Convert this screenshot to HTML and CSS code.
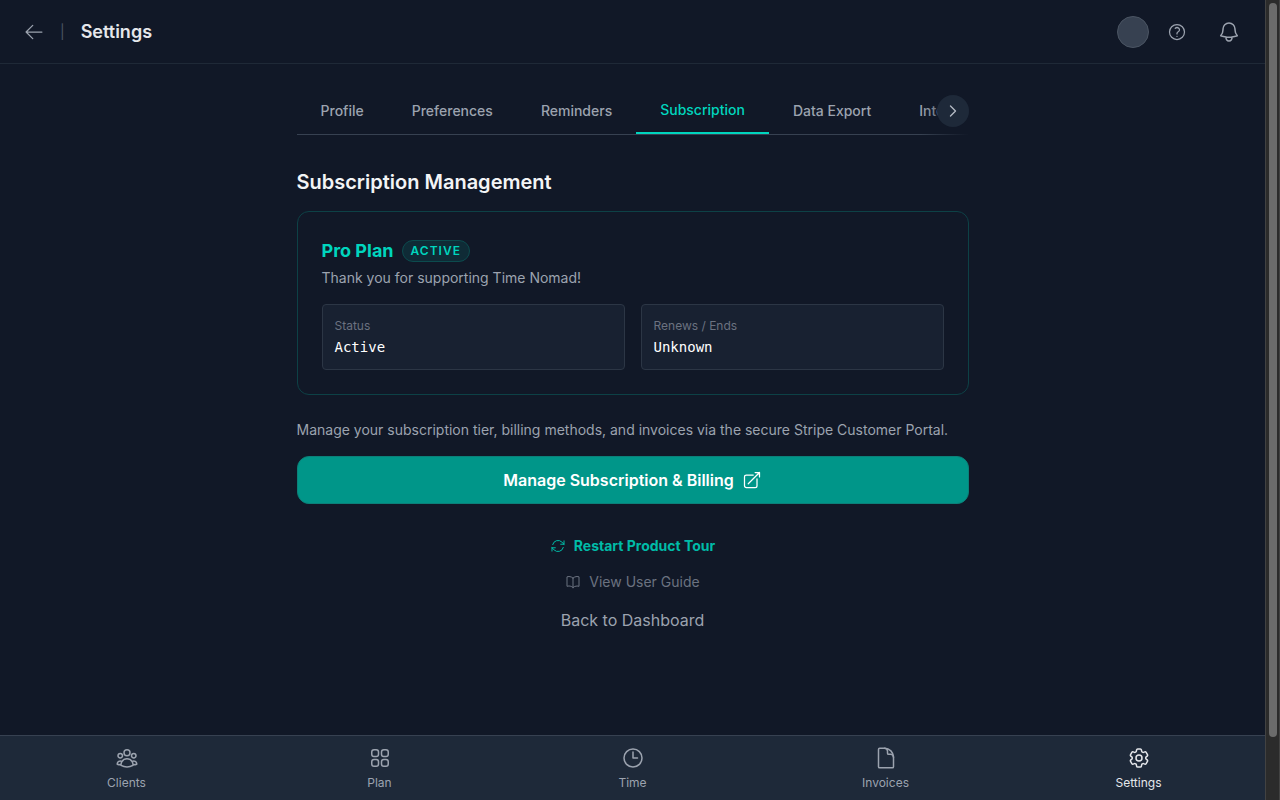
FILE: index.html
```html
<!DOCTYPE html>
<html lang="en">
<head>
  <meta charset="UTF-8" />
  <meta name="viewport" content="width=device-width, initial-scale=1.0"/>
  <title>Settings - Time Nomad</title>
  <link rel="stylesheet" href="styles.css">
</head>
<body>

  <div class="app">
    <header class="topbar">
      <a class="back" href="#" aria-label="Back">
        <svg class="icon icon-20" viewBox="0 0 24 24"><path d="M10.5 20 2.500 12m0 0 8-8M2.500 12h19"/></svg>
      </a>
      <span class="divider">|</span>
      <h1>Settings</h1>
      <div class="actions">
        <span class="avatar"></span>
        <button class="icon-btn" type="button" aria-label="Help">
          <svg class="icon icon-20" viewBox="0 0 24 24"><path d="M9.879 7.519c1.171-1.025 3.071-1.025 4.242 0 1.172 1.025 1.172 2.687 0 3.712-.203.179-.43.326-.67.442-.745.361-1.45.999-1.45 1.827v.75M21 12a9 9 0 1 1-18 0 9 9 0 0 1 18 0Zm-9 5.25h.008v.008H12v-.008Z"/></svg>
        </button>
        <button class="icon-btn bell" type="button" aria-label="Notifications">
          <svg class="icon" viewBox="0 0 24 24"><path d="M14.857 17.082a23.848 23.848 0 0 0 5.454-1.31A8.967 8.967 0 0 1 18 9.75V9A6 6 0 0 0 6 9v.75a8.967 8.967 0 0 1-2.312 6.022c1.733.64 3.56 1.085 5.455 1.31m5.714 0a24.255 24.255 0 0 1-5.714 0m5.714 0a3 3 0 1 1-5.714 0"/></svg>
        </button>
      </div>
    </header>

    <main>
      <div class="tabs-wrap">
        <nav class="tabs">
          <button type="button">Profile</button>
          <button type="button">Preferences</button>
          <button type="button">Reminders</button>
          <button type="button" class="active">Subscription</button>
          <button type="button">Data Export</button>
          <button type="button">Integrations</button>
        </nav>
        <div class="tabs-fade"></div>
        <button class="tabs-next" type="button" aria-label="More tabs">
          <svg class="icon icon-16 bold" viewBox="0 0 24 24"><path d="m8.25 4.5 7.5 7.5-7.5 7.5"/></svg>
        </button>
      </div>

      <h2>Subscription Management</h2>

      <section class="plan">
        <div class="plan-title">
          <h3>Pro Plan</h3>
          <span class="badge">ACTIVE</span>
        </div>
        <p>Thank you for supporting Time Nomad!</p>
        <dl class="facts">
          <div>
            <dt>Status</dt>
            <dd>Active</dd>
          </div>
          <div>
            <dt>Renews / Ends</dt>
            <dd>Unknown</dd>
          </div>
        </dl>
      </section>

      <p class="note">Manage your subscription tier, billing methods, and invoices via the secure Stripe Customer Portal.</p>
      <button class="manage" type="button">
        Manage Subscription &amp; Billing
        <svg class="icon icon-20" viewBox="0 0 24 24"><path d="M13.5 6H5.25A2.25 2.25 0 0 0 3 8.25v10.5A2.25 2.25 0 0 0 5.25 21h10.5A2.25 2.25 0 0 0 18 18.75V10.5m-10.5 6L21 3m0 0h-5.25M21 3v5.25"/></svg>
      </button>

      <div class="links">
        <button class="tour" type="button">
          <svg class="icon icon-16" viewBox="0 0 24 24"><path d="M16.023 9.348h4.992v-.001M2.985 19.644v-4.992m0 0h4.992m-4.993 0 3.181 3.183a8.25 8.25 0 0 0 13.803-3.7M4.031 9.865a8.25 8.25 0 0 1 13.803-3.7l3.181 3.182m0-4.991v4.99"/></svg>
          Restart Product Tour
        </button>
        <a class="guide" href="#">
          <svg class="icon icon-16" viewBox="0 0 24 24"><path d="M12 6.042A8.967 8.967 0 0 0 6 3.75c-1.052 0-2.062.18-3 .512v14.25A8.987 8.987 0 0 1 6 18c2.305 0 4.408.867 6 2.292m0-14.25a8.966 8.966 0 0 1 6-2.292c1.052 0 2.062.18 3 .512v14.25A8.987 8.987 0 0 0 18 18a8.967 8.967 0 0 0-6 2.292m0-14.25v14.25"/></svg>
          View User Guide
        </a>
        <a class="dashboard" href="#">Back to Dashboard</a>
      </div>
    </main>

    <nav class="bottom-nav">
      <a href="#">
        <svg class="icon" viewBox="0 0 24 24"><path d="M18 18.72a9.094 9.094 0 0 0 3.741-.479 3 3 0 0 0-4.682-2.72m.94 3.198.001.031c0 .225-.012.447-.037.666A11.944 11.944 0 0 1 12 21c-2.17 0-4.207-.576-5.963-1.584A6.062 6.062 0 0 1 6 18.719m12 0a5.971 5.971 0 0 0-.941-3.197m0 0A5.995 5.995 0 0 0 12 12.75a5.995 5.995 0 0 0-5.058 2.772m0 0a3 3 0 0 0-4.681 2.72 8.986 8.986 0 0 0 3.74.477m.94-3.197a5.971 5.971 0 0 0-.94 3.197M15 6.75a3 3 0 1 1-6 0 3 3 0 0 1 6 0Zm6 3a2.25 2.25 0 1 1-4.5 0 2.25 2.25 0 0 1 4.5 0Zm-13.5 0a2.25 2.25 0 1 1-4.5 0 2.25 2.25 0 0 1 4.5 0Z"/></svg>
        Clients
      </a>
      <a href="#">
        <svg class="icon" viewBox="0 0 24 24"><rect x="3.75" y="3.75" width="6.75" height="6.75" rx="2.25"/><rect x="13.5" y="3.75" width="6.75" height="6.75" rx="2.25"/><rect x="3.75" y="13.5" width="6.75" height="6.75" rx="2.25"/><rect x="13.5" y="13.5" width="6.75" height="6.75" rx="2.25"/></svg>
        Plan
      </a>
      <a href="#">
        <svg class="icon" viewBox="0 0 24 24"><path d="M12 6v6h4.5m4.5 0a9 9 0 1 1-18 0 9 9 0 0 1 18 0Z"/></svg>
        Time
      </a>
      <a href="#">
        <svg class="icon" viewBox="0 0 24 24"><path d="M19.5 11.250v9.375c0 .621-.504 1.125-1.125 1.125H5.625A1.125 1.125 0 0 1 4.5 20.625V3.375c0-.621.504-1.125 1.125-1.125H10.5a9 9 0 0 1 9 9Z"/><path d="M19.5 11.250a3 3 0 0 0-3-3h-1.875A1.125 1.125 0 0 1 13.500 7.125V5.250a3 3 0 0 0-3-3"/></svg>
        Invoices
      </a>
      <a href="#" class="current">
        <svg class="icon" viewBox="0 0 24 24"><path d="M9.594 3.94c.09-.542.56-.94 1.11-.94h2.593c.55 0 1.02.398 1.11.94l.213 1.281c.063.374.313.686.645.87.074.04.147.083.22.127.325.196.72.257 1.075.124l1.217-.456a1.125 1.125 0 0 1 1.37.49l1.296 2.247a1.125 1.125 0 0 1-.26 1.431l-1.003.827c-.293.241-.438.613-.43.992a7.723 7.723 0 0 1 0 .255c-.008.378.137.75.43.991l1.004.827c.424.35.534.955.26 1.43l-1.298 2.247a1.125 1.125 0 0 1-1.369.491l-1.217-.456c-.355-.133-.75-.072-1.076.124a6.47 6.47 0 0 1-.22.128c-.331.183-.581.495-.644.869l-.213 1.281c-.09.543-.56.94-1.11.94h-2.594c-.55 0-1.019-.398-1.11-.94l-.213-1.281c-.062-.374-.312-.686-.644-.87a6.52 6.52 0 0 1-.22-.127c-.325-.196-.72-.257-1.076-.124l-1.217.456a1.125 1.125 0 0 1-1.369-.49l-1.297-2.247a1.125 1.125 0 0 1 .26-1.431l1.004-.827c.292-.24.437-.613.43-.991a6.932 6.932 0 0 1 0-.255c.007-.38-.138-.751-.43-.992l-1.004-.827a1.125 1.125 0 0 1-.26-1.43l1.297-2.247a1.125 1.125 0 0 1 1.37-.491l1.216.456c.356.133.751.072 1.076-.124.072-.044.146-.086.22-.128.332-.183.582-.495.644-.869l.214-1.28Z"/><path d="M15 12a3 3 0 1 1-6 0 3 3 0 0 1 6 0Z"/></svg>
        Settings
      </a>
    </nav>
  </div>

  <div class="scrollbar" aria-hidden="true"><div class="thumb"></div></div>

</body>
</html>
```

FILE: styles.css
```css
* {
  box-sizing: border-box;
}
body {
  margin: 0;
  display: flex;
  height: 100vh;
  font-family: Inter, sans-serif;
  font-size: 14px;
  line-height: 20px;
  background: #111827;
  color: #f3f4f6;
}
h1, h2, h3, p, dl, dd {
  margin: 0;
}
button {
  font: inherit;
  color: inherit;
  background: none;
  border: none;
  padding: 0;
  cursor: pointer;
}
a {
  color: inherit;
  text-decoration: none;
}

/* icons */
.icon {
  display: block;
  flex: none;
  width: 24px;
  height: 24px;
  fill: none;
  stroke: currentColor;
  stroke-width: 1.5;
  stroke-linecap: round;
  stroke-linejoin: round;
}
.icon-20 {
  width: 20px;
  height: 20px;
}
.icon-16 {
  width: 16px;
  height: 16px;
}
.icon.bold {
  stroke-width: 2;
}

.app {
  flex: 1;
  min-width: 0;
  display: flex;
  flex-direction: column;
}

/* header */
.topbar {
  display: flex;
  align-items: center;
  height: 64px;
  padding: 0 24px;
  border-bottom: 1px solid #1f2937;
}
.back {
  color: #9ca3af;
}
.divider {
  margin: 0 16px;
  color: #4b5563;
}
.topbar h1 {
  font-size: 18px;
  line-height: 28px;
  font-weight: 600;
  color: #e5e7eb;
}
.actions {
  display: flex;
  align-items: center;
  margin-left: auto;
  color: #9ca3af;
}
.avatar {
  width: 32px;
  height: 32px;
  border-radius: 50%;
  background: #374151;
  border: 1px solid #4b5563;
}
.icon-btn {
  margin-left: 18px;
}
.icon-btn.bell {
  margin-left: 30px;
}

main {
  flex: 1;
  width: 100%;
  max-width: 672px;
  margin: 0 auto;
  padding-top: 24px;
}

/* tabs */
.tabs-wrap {
  position: relative;
  margin-bottom: 33px;
}
.tabs {
  display: flex;
  overflow: hidden;
  border-bottom: 1px solid #374151;
}
.tabs button {
  flex: none;
  padding: 12px 24px;
  font-weight: 500;
  color: #9ca3af;
}
.tabs .active {
  color: #00d5be;
  border-bottom: 2px solid #00d5be;
}
.tabs-fade {
  position: absolute;
  top: 0;
  right: 0;
  bottom: 0;
  width: 48px;
  background: linear-gradient(to left, #111827, transparent);
}
.tabs-next {
  position: absolute;
  top: 7px;
  right: 0;
  width: 32px;
  height: 32px;
  display: flex;
  align-items: center;
  justify-content: center;
  border-radius: 50%;
  background: #1e2939;
  color: #b4bac4;
}

/* subscription */
h2 {
  font-size: 20px;
  line-height: 28px;
  font-weight: 600;
  margin-bottom: 15px;
}
.plan {
  padding: 24px;
  border: 1px solid #0d4146;
  border-radius: 12px;
}
.plan-title {
  display: flex;
  align-items: center;
  gap: 8px;
  margin-bottom: 2px;
}
.plan h3 {
  font-size: 18px;
  line-height: 30px;
  font-weight: 700;
  color: #00d5be;
}
.badge {
  padding: 2px 8px;
  border: 1px solid #0c4b4e;
  border-radius: 12px;
  background: #0f2b36;
  color: #00d5be;
  font-size: 12px;
  line-height: 16px;
  font-weight: 600;
  letter-spacing: 1px;
}
.plan p, .note {
  color: #9ca3af;
}
.facts {
  display: grid;
  grid-template-columns: 1fr 1fr;
  gap: 16px;
  margin-top: 16px;
}
.facts div {
  padding: 12px;
  border: 1px solid #2c3645;
  border-radius: 4px;
  background: #182131;
}
.facts dt {
  margin-bottom: 2px;
  font-size: 12px;
  line-height: 18px;
  color: #6b7280;
}
.facts dd {
  font-family: "DejaVu Sans Mono", monospace;
  color: #fff;
}
.note {
  margin: 25px 0 16px;
}
.manage {
  display: flex;
  align-items: center;
  justify-content: center;
  gap: 8px;
  width: 100%;
  height: 48px;
  border: 1px solid #0c8079;
  border-radius: 12px;
  background: #009689;
  color: #fff;
  font-size: 16px;
  font-weight: 600;
}

.links {
  display: flex;
  flex-direction: column;
  align-items: center;
  gap: 16px;
  padding-top: 32px;
}
.tour, .guide {
  display: flex;
  align-items: center;
  gap: 8px;
}
.tour {
  color: #00bba7;
  font-weight: 700;
}
.guide {
  color: #6b7280;
}
.dashboard {
  color: #9ca3af;
  font-size: 16px;
  line-height: 24px;
}

/* bottom navigation */
.bottom-nav {
  display: flex;
  height: 65px;
  border-top: 1px solid #374151;
  background: #1e2939;
}
.bottom-nav a {
  flex: 1;
  display: flex;
  flex-direction: column;
  align-items: center;
  padding-top: 10px;
  gap: 4px;
  font-size: 12px;
  line-height: 18px;
  color: #9ca3af;
}
.bottom-nav .current {
  color: #e5e7eb;
}

/* page scrollbar */
.scrollbar {
  width: 15px;
  padding: 3px;
  border-left: 1px solid #424242;
  border-right: 1px solid #424242;
  background: #2b2b2b;
}
.thumb {
  width: 8px;
  height: 92.5%;
  border-radius: 4px;
  background: #6b6b6b;
}
```
